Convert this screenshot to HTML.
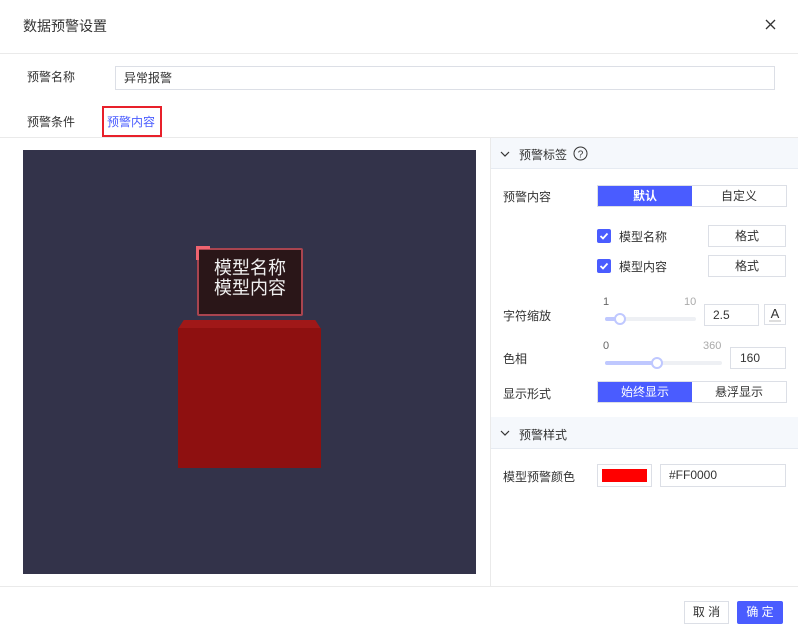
<!DOCTYPE html>
<html><head><meta charset="utf-8"><style>
*{box-sizing:border-box;margin:0;padding:0}
body{width:798px;height:636px;background:#fff;font-family:"Liberation Sans","Noto Sans CJK SC",sans-serif;font-size:12px;color:#333;position:relative;overflow:hidden}
.a{position:absolute}
.inp{position:absolute;border:1px solid #dcdfe6;background:#fff;padding-left:8px;line-height:20px;font-size:12px;color:#333}
.seg{position:absolute;height:22px;border:1px solid #dcdfe6;display:flex}
.seg div{flex:1;text-align:center;line-height:20px}
.seg .on{background:#4a5cff;color:#fff}
.btn{position:absolute;border:1px solid #dcdfe6;text-align:center;line-height:20px;background:#fff}
.cb{position:absolute;width:14px;height:14px;background:#4a5cff;border-radius:2px}
.lbl{position:absolute;font-size:12px;color:#333}
.track{position:absolute;height:4px;background:#eef0f4;border-radius:2px}
.fill{position:absolute;height:4px;background:#bfc8ff;border-radius:2px}
.knob{position:absolute;width:12px;height:12px;border:2px solid #bfc8ff;background:#fff;border-radius:50%}
.sm{position:absolute;font-size:11px;color:#666}
</style></head><body>
<div class="a" style="left:23px;top:16px;font-size:14px;color:#333">数据预警设置</div>
<svg class="a" style="left:765px;top:19px" width="11" height="11"><path d="M1 1L10 10M10 1L1 10" stroke="#333" stroke-width="1.3"/></svg>
<div class="a" style="left:0;top:53px;width:798px;height:1px;background:#eaeaea"></div>
<div class="lbl" style="left:27px;top:68px">预警名称</div>
<div class="inp" style="left:115px;top:66px;width:660px;height:24px;line-height:22px">异常报警</div>
<div class="lbl" style="left:27px;top:113px">预警条件</div>
<div class="a" style="left:102px;top:106px;width:60px;height:31px;border:2px solid #e8202a"></div>
<div class="lbl" style="left:107px;top:113px;color:#4a5cff">预警内容</div>
<div class="a" style="left:0;top:137px;width:798px;height:1px;background:#eaeaea"></div>
<div class="a" style="left:23px;top:150px;width:453px;height:424px;background:#33334a"></div>
<div class="a" style="left:178px;top:320px;width:143px;height:9px;background:#a01818;clip-path:polygon(4% 0,96% 0,100% 100%,0 100%)"></div>
<div class="a" style="left:178px;top:328px;width:143px;height:140px;background:#8e1010"></div>
<div class="a" style="left:197px;top:248px;width:106px;height:68px;background:#2a1618;border:2px solid #a9444f;border-radius:2px"></div>
<div class="a" style="left:196px;top:246px;width:14px;height:14px;border-left:3px solid #f06470;border-top:3px solid #f06470"></div>
<div class="a" style="left:197px;top:258px;width:106px;text-align:center;color:#f0f0f0;font-size:18px;line-height:20px">模型名称<br>模型内容</div>
<div class="a" style="left:490px;top:137px;width:1px;height:449px;background:#eaeaea"></div>
<div class="a" style="left:491px;top:138px;width:307px;height:31px;background:#f5f8fc;border-bottom:1px solid #e6ebf2"></div>
<svg class="a" style="left:500px;top:151px" width="10" height="7"><path d="M1 1L5 5L9 1" stroke="#333" fill="none" stroke-width="1.2"/></svg>
<div class="lbl" style="left:519px;top:146px">预警标签</div>
<svg class="a" style="left:573px;top:146px" width="15" height="15"><circle cx="7.5" cy="7.5" r="6.5" stroke="#333" fill="none"/><text x="7.5" y="11.5" font-size="10" text-anchor="middle" fill="#333" font-family="Liberation Sans">?</text></svg>
<div class="lbl" style="left:503px;top:188px">预警内容</div>
<div class="seg" style="left:597px;top:185px;width:190px"><div class="on" style="font-weight:bold">默认</div><div>自定义</div></div>
<div class="cb" style="left:597px;top:229px"></div><svg class="a" style="left:597px;top:229px" width="14" height="14"><path d="M3.5 7L6 9.5L10.5 4.5" stroke="#fff" stroke-width="1.8" fill="none"/></svg>
<div class="lbl" style="left:619px;top:228px">模型名称</div>
<div class="btn" style="left:708px;top:225px;width:78px;height:22px">格式</div>
<div class="cb" style="left:597px;top:259px"></div><svg class="a" style="left:597px;top:259px" width="14" height="14"><path d="M3.5 7L6 9.5L10.5 4.5" stroke="#fff" stroke-width="1.8" fill="none"/></svg>
<div class="lbl" style="left:619px;top:258px">模型内容</div>
<div class="btn" style="left:708px;top:255px;width:78px;height:22px">格式</div>
<div class="lbl" style="left:503px;top:307px">字符缩放</div>
<div class="sm" style="left:603px;top:296px">1</div><div class="sm" style="left:684px;top:296px;color:#aaa">10</div>
<div class="track" style="left:605px;top:317px;width:91px"></div>
<div class="fill" style="left:605px;top:317px;width:16px"></div>
<div class="knob" style="left:614px;top:313px"></div>
<div class="inp" style="left:704px;top:304px;width:55px;height:22px">2.5</div>
<div class="btn" style="left:764px;top:304px;width:22px;height:21px;line-height:17px;font-size:13px">A<div style="position:absolute;left:4px;bottom:2px;width:12px;height:2px;background:#ddd"></div></div>
<div class="lbl" style="left:503px;top:350px">色相</div>
<div class="sm" style="left:603px;top:340px">0</div><div class="sm" style="left:703px;top:340px;color:#aaa">360</div>
<div class="track" style="left:605px;top:361px;width:117px"></div>
<div class="fill" style="left:605px;top:361px;width:52px"></div>
<div class="knob" style="left:651px;top:357px"></div>
<div class="inp" style="left:730px;top:347px;width:56px;height:22px;padding-left:9px">160</div>
<div class="lbl" style="left:503px;top:385px">显示形式</div>
<div class="seg" style="left:597px;top:381px;width:190px"><div class="on">始终显示</div><div>悬浮显示</div></div>
<div class="a" style="left:491px;top:417px;width:307px;height:32px;background:#f5f8fc;border-bottom:1px solid #e6ebf2"></div>
<svg class="a" style="left:500px;top:430px" width="10" height="7"><path d="M1 1L5 5L9 1" stroke="#333" fill="none" stroke-width="1.2"/></svg>
<div class="lbl" style="left:519px;top:426px">预警样式</div>
<div class="lbl" style="left:503px;top:468px">模型预警颜色</div>
<div class="a" style="left:597px;top:464px;width:55px;height:23px;border:1px solid #dcdfe6;background:#fff"><div style="position:absolute;left:4px;top:4px;width:45px;height:13px;background:#f00"></div></div>
<div class="inp" style="left:660px;top:464px;width:126px;height:23px">#FF0000</div>
<div class="a" style="left:0;top:586px;width:798px;height:1px;background:#eaeaea"></div>
<div class="btn" style="left:684px;top:601px;width:45px;height:23px">取 消</div>
<div class="a" style="left:737px;top:601px;width:46px;height:23px;background:#4a5cff;color:#fff;text-align:center;line-height:23px;border-radius:2px">确 定</div>
</body></html>
